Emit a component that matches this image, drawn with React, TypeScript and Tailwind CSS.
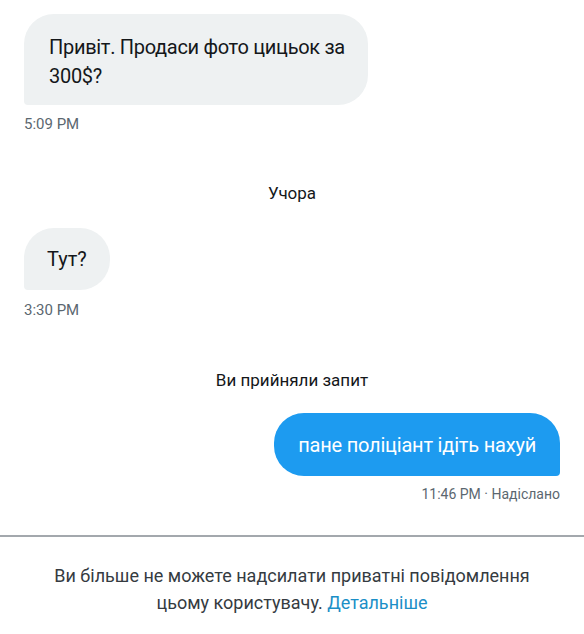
import React from "react";

export default function App() {
  return (
    <div className="w-[584px] h-[634px] bg-white overflow-hidden flex flex-col" style={{ fontFamily: "Roboto, 'Noto Sans', sans-serif" }}>
      <div className="flex flex-col px-[24px] pt-[14px]">
        <div className="self-start w-[344px] bg-[#eef1f2] rounded-[30px] rounded-bl-[4px] pl-[25px] pr-[10px] pt-[19px] pb-[14px] text-[20px] leading-[29px] tracking-[-0.3px] text-[#14171a] whitespace-nowrap">
          Привіт. Продаси фото цицьок за
          <br />
          300$?
        </div>
        <div className="mt-[11px] text-[15px] leading-[16px] text-[#5b6770]">5:09 PM</div>

        <div className="mt-[51px] text-center text-[17px] leading-[20px] text-[#14171a]">Учора</div>

        <div className="mt-[25px] self-start bg-[#eef1f2] rounded-[30px] rounded-bl-[4px] px-[23px] h-[62px] flex items-center text-[20px] text-[#14171a]">
          Тут?
        </div>
        <div className="mt-[12px] text-[15px] leading-[16px] text-[#5b6770]">3:30 PM</div>

        <div className="mt-[52px] text-center text-[17px] leading-[20px] text-[#14171a]">Ви прийняли запит</div>

        <div className="mt-[23px] self-end bg-[#1d9bf0] rounded-[30px] rounded-br-[4px] px-[24px] h-[63px] flex items-center text-[20px] tracking-[-0.2px] text-white">
          пане поліціант ідіть нахуй
        </div>
        <div className="mt-[10px] self-end text-[14px] leading-[16px] text-[#5b6770]">11:46 PM · Надіслано</div>
      </div>

      <div className="mt-[33px] h-[2px] bg-[#a3a8ad]" />
      <div className="pt-[25px] text-center text-[18px] leading-[27px] text-[#353b41]">
        Ви більше не можете надсилати приватні повідомлення
        <br />
        цьому користувачу. <span className="text-[#1b8fc7]">Детальніше</span>
      </div>
    </div>
  );
}
